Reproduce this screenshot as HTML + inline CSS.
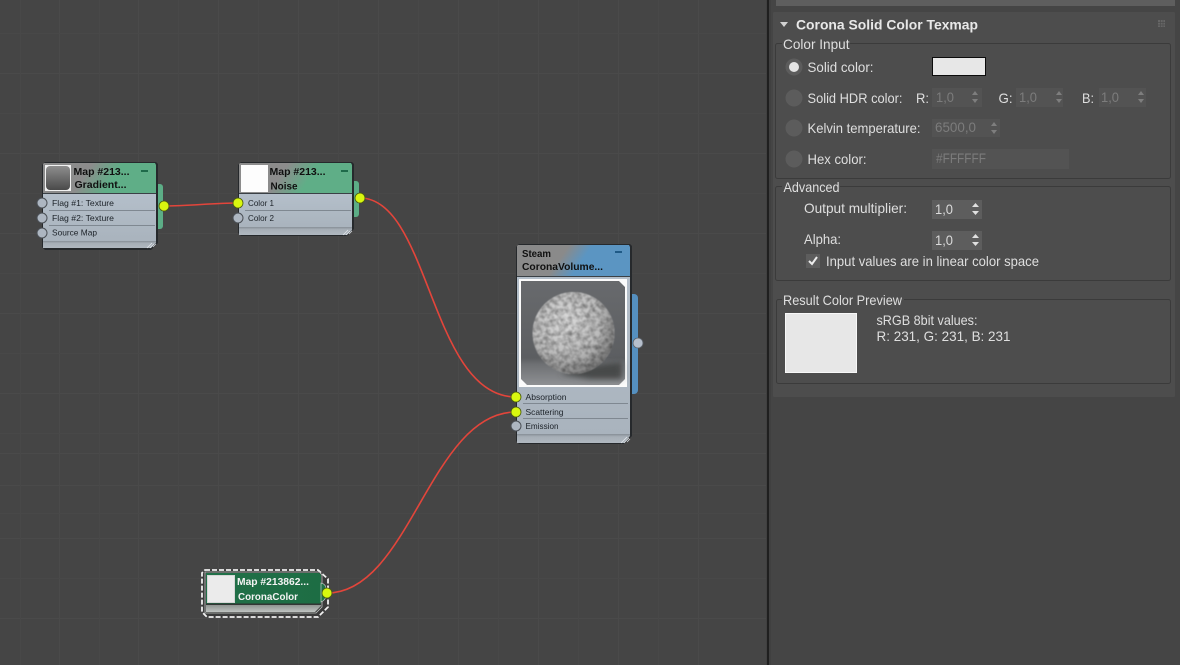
<!DOCTYPE html>
<html><head><meta charset="utf-8"><style>
html,body{margin:0;padding:0;width:1180px;height:665px;overflow:hidden;background:#454545}
svg{display:block}
text{font-family:"Liberation Sans",sans-serif}
.p{font-size:14px;fill:#dfdfdf}
.d{font-size:14px;fill:#7c7c7c}
.n{font-size:8.5px;fill:#1c2228}
.t{font-size:10.5px;font-weight:bold;fill:#101010}
</style></head><body>
<svg width="1180" height="665" viewBox="0 0 1180 665" xmlns="http://www.w3.org/2000/svg">
<defs>
<linearGradient id="g1" gradientUnits="userSpaceOnUse" x1="44" y1="8" x2="66" y2="22"><stop offset="0" stop-color="#8c8c8c"/><stop offset="1" stop-color="#5fae87"/></linearGradient>
<linearGradient id="g2" gradientUnits="userSpaceOnUse" x1="46" y1="9" x2="62" y2="20"><stop offset="0" stop-color="#8a8a8a"/><stop offset="1" stop-color="#5b95c2"/></linearGradient>
<linearGradient id="body" x1="0" y1="0" x2="0" y2="1"><stop offset="0" stop-color="#b4bfca"/><stop offset="1" stop-color="#a9b3bd"/></linearGradient>
<linearGradient id="foot" x1="0" y1="0" x2="0" y2="1"><stop offset="0" stop-color="#868e96"/><stop offset=".3" stop-color="#a6aeb6"/><stop offset="1" stop-color="#b0b8c0"/></linearGradient>
<linearGradient id="foot4" x1="0" y1="0" x2="0" y2="1"><stop offset="0" stop-color="#8f9491"/><stop offset="1" stop-color="#bfc3c1"/></linearGradient>
<linearGradient id="gr" x1="0" y1="0" x2="0" y2="1"><stop offset="0" stop-color="#8e8e8e"/><stop offset="1" stop-color="#4a4a4a"/></linearGradient>
<linearGradient id="sw" x1="0" y1="0" x2="1" y2="0"><stop offset="0" stop-color="#217048"/><stop offset="1" stop-color="#1d6d44"/></linearGradient>
<radialGradient id="sph" cx=".4" cy=".35" r=".72"><stop offset="0" stop-color="#dcdcdc"/><stop offset=".6" stop-color="#bcbcbc"/><stop offset="1" stop-color="#727272"/></radialGradient>
<linearGradient id="bgp" x1="0" y1="0" x2="0" y2="1"><stop offset="0" stop-color="#686a6d"/><stop offset=".74" stop-color="#5c5e61"/><stop offset=".8" stop-color="#6e7073"/><stop offset="1" stop-color="#8e9093"/></linearGradient>
<filter id="b"><feGaussianBlur stdDeviation=".3"/></filter>
<filter id="b2" x="-30%" y="-100%" width="160%" height="300%"><feGaussianBlur stdDeviation="3"/></filter>
<filter id="tex" color-interpolation-filters="sRGB" x="-5%" y="-5%" width="110%" height="110%">
<feTurbulence type="fractalNoise" baseFrequency=".22" numOctaves="2" seed="7" result="n"/>
<feColorMatrix in="n" type="matrix" values=".75 0 0 0 .5  .75 0 0 0 .5  .75 0 0 0 .5  0 0 0 0 1" result="g"/>
<feBlend in="SourceGraphic" in2="g" mode="multiply" result="m"/>
<feComposite in="m" in2="SourceAlpha" operator="in" result="c"/>
<feGaussianBlur in="c" stdDeviation=".5"/>
</filter>
</defs>

<!-- canvas -->
<rect width="766" height="665" fill="#454545"/>
<g stroke="#4a4a4a" stroke-width="1" fill="none">
<path d="M59.500 0V665M138.500 0V665M218.500 0V665M298.500 0V665M378.500 0V665M458.500 0V665M538.500 0V665M618.500 0V665M698.500 0V665"/>
<path d="M0 73.500H766M0 153.500H766M0 233.500H766M0 313.500H766M0 393.500H766M0 453.500H766M0 485.500H766M0 538.500H766M0 618.500H766"/>
</g>
<g stroke="#484848" stroke-width="1" fill="none">
<path d="M20.500 0V665M99.500 0V665M178.500 0V665M258.500 0V665M338.500 0V665M418.500 0V665M498.500 0V665M578.500 0V665M658.500 0V665"/>
<path d="M0 33.500H766M0 113.500H766M0 193.500H766M0 273.500H766M0 353.500H766M0 433.500H766M0 513.500H766M0 578.500H766"/>
</g>

<!-- wires -->
<g fill="none" stroke="#e3453a" stroke-width="1.600" filter="url(#b)">
<path d="M164 206C190 206 212 203 238 203"/>
<path d="M360 198C430 198 430 397 516 397"/>
<path d="M327 593C410 593 430 412 516 412"/>
</g>

<!-- node 1 -->
<g>
<path d="M155 184h5a3 3 0 0 1 3 3v39a3 3 0 0 1-3 3h-5z" fill="#5cad86"/>
<path d="M45 162h111l2 2v79l-7 7H45l-3-3V165z" fill="#26292c"/>
<g transform="translate(43,163)"><path d="M1 0h111l1 2v28H0v-29z" fill="url(#g1)"/></g>
<rect x="43" y="194" width="113" height="48" fill="url(#body)"/>
<path d="M43 193.500h113" stroke="#3a4045"/>
<path d="M49 210.500h106M49 225.500h106" stroke="#7f8891"/>
<path d="M43 241h113v2l-5 5H43z" fill="url(#foot)"/>
<path d="M147 248l5-5M150 248l4-4M153 247l3-3" stroke="#e6eaee" stroke-width=".7"/>
<rect x="45" y="165" width="26" height="26" fill="#f2f2f2"/>
<rect x="46" y="166" width="24" height="24" rx="4" fill="url(#gr)"/>
<rect x="141" y="170" width="7" height="2" fill="#1e6a4a"/>
<text class="t" x="73.500" y="175" textLength="56" lengthAdjust="spacingAndGlyphs">Map #213...</text>
<text class="t" x="74.500" y="188" textLength="52" lengthAdjust="spacingAndGlyphs">Gradient...</text>
<text class="n" x="52" y="206" textLength="62" lengthAdjust="spacingAndGlyphs">Flag #1: Texture</text>
<text class="n" x="52" y="221" textLength="62" lengthAdjust="spacingAndGlyphs">Flag #2: Texture</text>
<text class="n" x="52" y="235.500" textLength="45" lengthAdjust="spacingAndGlyphs">Source Map</text>
<g fill="#adb6c1" stroke="#4a4f55"><circle cx="42" cy="203" r="5"/><circle cx="42" cy="218" r="5"/><circle cx="42" cy="233" r="5"/></g>
<circle cx="164" cy="206" r="5" fill="#d9f70f" stroke="#4a5a10" stroke-width=".8"/>
</g>

<!-- node 2 -->
<g>
<path d="M351 181h5a3 3 0 0 1 3 3v30a3 3 0 0 1-3 3h-5z" fill="#5cad86"/>
<path d="M241 162h111l2 2v65l-7 7H241l-3-3V165z" fill="#26292c"/>
<g transform="translate(239,163)"><path d="M1 0h111l1 2v28H0v-29z" fill="url(#g1)"/></g>
<rect x="239" y="194" width="113" height="34" fill="url(#body)"/>
<path d="M239 193.500h113" stroke="#3a4045"/>
<path d="M245 210.500h106" stroke="#7f8891"/>
<path d="M239 227h113v3l-5 5H239z" fill="url(#foot)"/>
<path d="M343 235l5-5M346 235l4-4M349 234l3-3" stroke="#e6eaee" stroke-width=".7"/>
<rect x="241" y="165" width="27" height="27" fill="#fdfdfd"/>
<rect x="341" y="170" width="7" height="2" fill="#1e6a4a"/>
<text class="t" x="269.500" y="175" textLength="56" lengthAdjust="spacingAndGlyphs">Map #213...</text>
<text class="t" x="270.500" y="189.500" textLength="27" lengthAdjust="spacingAndGlyphs">Noise</text>
<text class="n" x="248" y="206" textLength="26" lengthAdjust="spacingAndGlyphs">Color 1</text>
<text class="n" x="248" y="221" textLength="26" lengthAdjust="spacingAndGlyphs">Color 2</text>
<circle cx="238" cy="203" r="5" fill="#d9f70f" stroke="#4a5a10" stroke-width=".8"/>
<circle cx="238" cy="218" r="5" fill="#adb6c1" stroke="#4a4f55"/>
<circle cx="360" cy="198" r="5" fill="#d9f70f" stroke="#4a5a10" stroke-width=".8"/>
</g>

<!-- node 3 -->
<g>
<path d="M629 294h5a4 4 0 0 1 4 4v92a4 4 0 0 1-4 4h-5z" fill="#5590c0"/>
<path d="M519 244h111l2 2v190l-8 8H519l-3-3V247z" fill="#26292c"/>
<g transform="translate(517,245)"><path d="M1 0h111l1 2v29H0v-30z" fill="url(#g2)"/></g>
<rect x="517" y="277" width="113" height="158" fill="url(#body)"/>
<path d="M517 276.500h113" stroke="#3a4045"/>
<rect x="519" y="279" width="108" height="108" fill="#fbfbfb"/>
<rect x="521" y="281" width="104" height="104" fill="url(#bgp)"/>
<path d="M619 281h6v6zM521 379v6h6zM625 379v6h-6z" fill="#fbfbfb"/>
<path d="M560 374Q590 364 622 362V379L590 379Z" fill="#47484a" filter="url(#b2)"/>
<circle cx="573.500" cy="333" r="41" fill="url(#sph)" filter="url(#tex)"/>
<path d="M523 403.500h105M523 418.500h105" stroke="#7f8891"/>
<path d="M517 434h113v2l-6 7H517z" fill="url(#foot)"/>
<path d="M621 443l6-6M624 443l5-5M627 442l3-3" stroke="#e6eaee" stroke-width=".7"/>
<rect x="615" y="251" width="7" height="2" fill="#1f5a86"/>
<text class="t" x="522" y="257" textLength="29" lengthAdjust="spacingAndGlyphs">Steam</text>
<text class="t" x="522" y="270" textLength="81" lengthAdjust="spacingAndGlyphs">CoronaVolume...</text>
<text class="n" x="525.500" y="400" textLength="41" lengthAdjust="spacingAndGlyphs">Absorption</text>
<text class="n" x="525.500" y="415" textLength="38" lengthAdjust="spacingAndGlyphs">Scattering</text>
<text class="n" x="525.500" y="429" textLength="33" lengthAdjust="spacingAndGlyphs">Emission</text>
<circle cx="516" cy="397" r="5" fill="#d9f70f" stroke="#4a5a10" stroke-width=".8"/>
<circle cx="516" cy="412" r="5" fill="#d9f70f" stroke="#4a5a10" stroke-width=".8"/>
<circle cx="516" cy="426" r="5" fill="#adb6c1" stroke="#4a4f55"/>
<circle cx="638" cy="343" r="5" fill="#b6bfcc" stroke="#5a6068" stroke-width=".8"/>
</g>

<!-- node 4 -->
<g>
<path d="M205 570h113l10 9v28l-10 10H207l-5-5V573z" fill="#3a3a3a"/>
<path d="M205 570h113l10 9v28l-10 10H207l-5-5V573z" fill="none" stroke="#efefef" stroke-width="1.800" stroke-dasharray="5 2"/>
<path d="M206 573h113l2 2v29H206z" fill="url(#sw)"/>
<path d="M206 605h115v1l-6 6H206z" fill="url(#foot4)"/>
<path d="M206 604h115" stroke="#2e3330"/>
<path d="M205 572h114.500l2.500 3v32l-6 6H205z" fill="none" stroke="#bfc4c1" stroke-width=".8"/>
<rect x="207.500" y="575.500" width="27" height="27" fill="#ebebeb" stroke="#d6d6d6"/>
<path d="M321 583q5 1 5 6v6q0 5-5 7z" fill="#217048" stroke="#d8d8d8" stroke-width=".6"/>
<text class="t" x="237" y="585" textLength="72" lengthAdjust="spacingAndGlyphs" style="fill:#f3f3f3">Map #213862...</text>
<text class="t" x="238" y="600" textLength="60" lengthAdjust="spacingAndGlyphs" style="fill:#f3f3f3">CoronaColor</text>
<circle cx="327" cy="593" r="5" fill="#d9f70f" stroke="#4a5a10" stroke-width=".8"/>
</g>

<!-- divider and right panel -->
<rect x="766" y="0" width="6" height="665" fill="#404040"/>
<rect x="767" y="0" width="2" height="665" fill="#1f1f1f"/>
<rect x="771" y="0" width="409" height="665" fill="#454545"/>
<rect x="776" y="0" width="399" height="6" fill="#5e5e5e"/>
<rect x="773" y="12" width="402" height="385" rx="1" fill="#4d4d4d"/>

<path d="M780 22h8l-4 5z" fill="#d2d2d2"/>
<text x="796" y="29.500" textLength="182" lengthAdjust="spacingAndGlyphs" style="font-size:14px;font-weight:bold;fill:#e8e8e8">Corona Solid Color Texmap</text>
<rect x="1158" y="20" width="7" height="7" fill="#666"/>
<path d="M1160.500 20v7M1163 20v7M1158 22.500h7M1158 25h7" stroke="#4d4d4d" stroke-width=".7"/>

<!-- groups -->
<g fill="none" stroke="#3b3b3b" stroke-width="1">
<rect x="775.500" y="43.500" width="395" height="135" rx="2"/>
<rect x="775.500" y="186.500" width="395" height="94" rx="2"/>
<rect x="776.500" y="299.500" width="394" height="84" rx="2"/>
</g>
<rect x="782" y="36" width="68" height="14" fill="#4d4d4d"/>
<rect x="782" y="180" width="58" height="14" fill="#4d4d4d"/>
<rect x="782" y="292" width="122" height="14" fill="#4d4d4d"/>
<text class="p" x="783" y="49" textLength="66.500" lengthAdjust="spacingAndGlyphs">Color Input</text>
<text class="p" x="783.500" y="192" textLength="56" lengthAdjust="spacingAndGlyphs">Advanced</text>
<text class="p" x="783" y="305" textLength="119" lengthAdjust="spacingAndGlyphs">Result Color Preview</text>

<!-- radios -->
<g fill="#5c5c5c"><circle cx="794" cy="67" r="8.500"/><circle cx="794" cy="98" r="8.500"/><circle cx="794" cy="128" r="8.500"/><circle cx="794" cy="159" r="8.500"/></g>
<circle cx="794" cy="67" r="5" fill="#e4e4e4"/>
<text class="p" x="807.500" y="72" textLength="66" lengthAdjust="spacingAndGlyphs">Solid color:</text>
<text class="p" x="807.500" y="103" textLength="95" lengthAdjust="spacingAndGlyphs">Solid HDR color:</text>
<text class="p" x="807.500" y="133" textLength="113" lengthAdjust="spacingAndGlyphs">Kelvin temperature:</text>
<text class="p" x="807.500" y="164" textLength="59" lengthAdjust="spacingAndGlyphs">Hex color:</text>
<rect x="932.500" y="57.500" width="53" height="18" fill="#e7e7e7" stroke="#0c0c0c"/>

<!-- disabled spinners -->
<g fill="#535353">
<rect x="932" y="88" width="50" height="19"/><rect x="1016" y="88" width="47" height="19"/><rect x="1099" y="88" width="47" height="19"/>
<rect x="932" y="119" width="68" height="18"/><rect x="932" y="149" width="137" height="20"/>
</g>
<text class="p" x="916" y="103" textLength="13" lengthAdjust="spacingAndGlyphs">R:</text>
<text class="p" x="998.500" y="103" textLength="14" lengthAdjust="spacingAndGlyphs">G:</text>
<text class="p" x="1082" y="103" textLength="12" lengthAdjust="spacingAndGlyphs">B:</text>
<text class="d" x="936" y="102" textLength="18" lengthAdjust="spacingAndGlyphs">1,0</text>
<text class="d" x="1019" y="102" textLength="18" lengthAdjust="spacingAndGlyphs">1,0</text>
<text class="d" x="1101" y="102" textLength="18" lengthAdjust="spacingAndGlyphs">1,0</text>
<text class="d" x="935" y="132" textLength="41" lengthAdjust="spacingAndGlyphs">6500,0</text>
<text class="d" x="936" y="163" textLength="50" lengthAdjust="spacingAndGlyphs">#FFFFFF</text>
<path d="M972 95l3-4 3 4zM972 99l3 4 3-4zM1056 95l3-4 3 4zM1056 99l3 4 3-4zM1138 95l3-4 3 4zM1138 99l3 4 3-4zM991 126l3-4 3 4zM991 130l3 4 3-4z" fill="#7e7e7e"/>

<!-- advanced -->
<text class="p" x="804" y="213" textLength="103" lengthAdjust="spacingAndGlyphs">Output multiplier:</text>
<text class="p" x="804" y="244" textLength="37" lengthAdjust="spacingAndGlyphs">Alpha:</text>
<rect x="932" y="200" width="50" height="19" fill="#5d5d5d"/>
<rect x="932" y="231" width="50" height="19" fill="#5d5d5d"/>
<text x="935" y="214" textLength="18" lengthAdjust="spacingAndGlyphs" style="font-size:14px;fill:#dadada">1,0</text>
<text x="935" y="245" textLength="18" lengthAdjust="spacingAndGlyphs" style="font-size:14px;fill:#dadada">1,0</text>
<path d="M972 207l3.500-4 3.500 4zM972 211l3.500 4 3.500-4zM972 238l3.500-4 3.500 4zM972 242l3.500 4 3.500-4z" fill="#e0e0e0"/>
<rect x="806" y="254" width="14" height="14" fill="#5d5d5d"/>
<path d="M809 261l3 3 5-7" fill="none" stroke="#ececec" stroke-width="2"/>
<text class="p" x="826" y="266" textLength="213" lengthAdjust="spacingAndGlyphs">Input values are in linear color space</text>

<!-- result -->
<rect x="785.500" y="313.500" width="71" height="59" fill="#e7e7e7" stroke="#f8f8f8"/>
<text class="p" x="876.500" y="325" textLength="101" lengthAdjust="spacingAndGlyphs">sRGB 8bit values:</text>
<text class="p" x="876.500" y="341" textLength="134" lengthAdjust="spacingAndGlyphs">R: 231, G: 231, B: 231</text>
</svg>
</body></html>
